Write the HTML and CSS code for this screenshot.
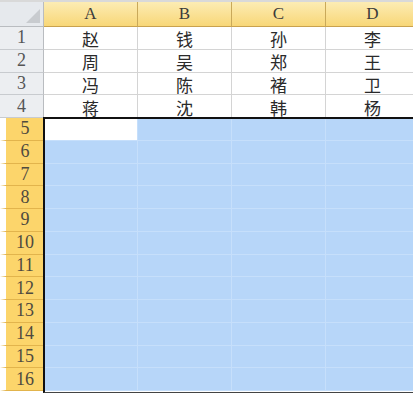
FILE: index.html
```
<!DOCTYPE html>
<html lang="zh">
<head>
    <meta charset="UTF-8">
    <title>工作表</title>
    <link rel="stylesheet" href="styles.css">
</head>
<body>
    <div class="sheet">
        <div class="corner"><span class="tri"></span></div>
        <div class="col-head">A</div>
        <div class="col-head">B</div>
        <div class="col-head">C</div>
        <div class="col-head">D</div>

        <div class="row-head">1</div>
        <div class="cell">赵</div><div class="cell">钱</div><div class="cell">孙</div><div class="cell">李</div>
        <div class="row-head">2</div>
        <div class="cell">周</div><div class="cell">吴</div><div class="cell">郑</div><div class="cell">王</div>
        <div class="row-head">3</div>
        <div class="cell">冯</div><div class="cell">陈</div><div class="cell">褚</div><div class="cell">卫</div>
        <div class="row-head">4</div>
        <div class="cell">蒋</div><div class="cell">沈</div><div class="cell">韩</div><div class="cell">杨</div>

        <div class="row-head sel">5</div>
        <div class="cell active"></div><div class="cell blue"></div><div class="cell blue"></div><div class="cell blue"></div>
        <div class="row-head sel">6</div>
        <div class="cell blue"></div><div class="cell blue"></div><div class="cell blue"></div><div class="cell blue"></div>
        <div class="row-head sel">7</div>
        <div class="cell blue"></div><div class="cell blue"></div><div class="cell blue"></div><div class="cell blue"></div>
        <div class="row-head sel">8</div>
        <div class="cell blue"></div><div class="cell blue"></div><div class="cell blue"></div><div class="cell blue"></div>
        <div class="row-head sel">9</div>
        <div class="cell blue"></div><div class="cell blue"></div><div class="cell blue"></div><div class="cell blue"></div>
        <div class="row-head sel">10</div>
        <div class="cell blue"></div><div class="cell blue"></div><div class="cell blue"></div><div class="cell blue"></div>
        <div class="row-head sel">11</div>
        <div class="cell blue"></div><div class="cell blue"></div><div class="cell blue"></div><div class="cell blue"></div>
        <div class="row-head sel">12</div>
        <div class="cell blue"></div><div class="cell blue"></div><div class="cell blue"></div><div class="cell blue"></div>
        <div class="row-head sel">13</div>
        <div class="cell blue"></div><div class="cell blue"></div><div class="cell blue"></div><div class="cell blue"></div>
        <div class="row-head sel">14</div>
        <div class="cell blue"></div><div class="cell blue"></div><div class="cell blue"></div><div class="cell blue"></div>
        <div class="row-head sel">15</div>
        <div class="cell blue"></div><div class="cell blue"></div><div class="cell blue"></div><div class="cell blue"></div>
        <div class="row-head sel">16</div>
        <div class="cell blue"></div><div class="cell blue"></div><div class="cell blue"></div><div class="cell blue"></div>

        <div class="selection"></div>
    </div>
</body>
</html>
```

FILE: styles.css
```
/* 页面 */
body {
    margin: 0;
    background-color: #fff;
    font-family: "Liberation Serif", "DejaVu Serif", serif;
}

/* 表格区域 */
.sheet {
    position: relative;
    display: grid;
    grid-template-columns: 44px repeat(4, 94px);
    grid-template-rows: 25px repeat(16, 22.75px);
    width: 413px;
    height: 394px;
    overflow: hidden;
    border-top: 2px solid #d9d9d9;
    box-sizing: border-box;
}

.corner {
    position: relative;
    background-color: #e6e9ed;
    border-right: 1px solid #b9bcc0;
    border-bottom: 1px solid #b9bcc0;
}

.corner .tri {
    position: absolute;
    right: 3px;
    bottom: 3px;
    width: 0;
    height: 0;
    border-left: 14px solid transparent;
    border-bottom: 14px solid #c8cbcf;
}

/* 列标题 */
.col-head {
    display: flex;
    align-items: center;
    justify-content: center;
    background: linear-gradient(#fcecb4, #f8d778);
    border-right: 1px solid #c9a95a;
    border-bottom: 1px solid #c9a24e;
    color: #3b3b3b;
    font-size: 17px;
}

/* 行标题 */
.row-head {
    display: flex;
    align-items: center;
    justify-content: center;
    background-color: #eceef1;
    border-right: 1px solid #b9bcc0;
    border-bottom: 1px solid #c8cbcf;
    color: #555;
    font-size: 18px;
}

.row-head.sel {
    background-color: #fcd56b;
    border-left: 6px solid #fff;
    border-bottom-color: #e2b44c;
    border-right: none;
    color: #4f4a3f;
}

/* 单元格 */
.cell {
    display: flex;
    align-items: center;
    justify-content: center;
    padding-top: 2px;
    border-right: 1px solid #d4d4d4;
    border-bottom: 1px solid #d4d4d4;
    color: #2a2a2a;
    font-family: "Noto Sans CJK SC", sans-serif;
    font-size: 17px;
    box-sizing: border-box;
}

.cell.blue {
    background-color: #b7d6f9;
    border-color: #c6dffb;
}

.cell.active {
    background-color: #fff;
    border-color: #c6dffb;
}

/* 选区边框 */
.selection {
    position: absolute;
    left: 43px;
    top: 115px;
    right: -10px;
    bottom: 1px;
    border-top: 2px solid #111;
    border-left: 2px solid #111;
    border-bottom: 1px solid #444;
    pointer-events: none;
}
```
